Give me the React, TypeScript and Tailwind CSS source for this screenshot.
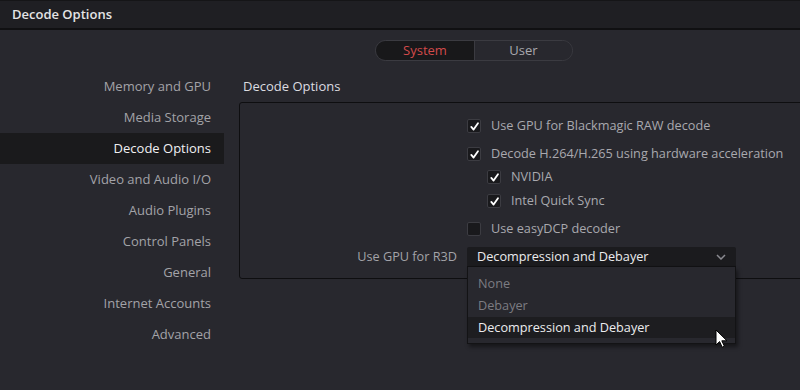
import React from "react";

const sidebarItems = [
    "Memory and GPU",
    "Media Storage",
    "Decode Options",
    "Video and Audio I/O",
    "Audio Plugins",
    "Control Panels",
    "General",
    "Internet Accounts",
    "Advanced",
];

const Checkbox: React.FC<{ checked?: boolean }> = ({ checked }) => (
    <span className="flex h-[14px] w-[14px] shrink-0 items-center justify-center rounded-[2px] border border-[#3c3c42] bg-[#19191c]">
        {checked && (
            <svg viewBox="0 0 12 12" className="h-[11px] w-[11px]" fill="none" stroke="#ffffff" strokeWidth={2} strokeLinecap="round" strokeLinejoin="round">
                <path d="M2.5 6.5l2.5 2.8L9.8 2.4" />
            </svg>
        )}
    </span>
);

const CheckRow: React.FC<{ label: string; checked?: boolean; nested?: boolean; className?: string }> = ({ label, checked, nested, className }) => (
    <>
        <div />
        <div className={`flex items-center gap-[10px] ${nested ? "pl-[20px]" : ""} ${className ?? ""}`}>
            <Checkbox checked={checked} />
            <span className="text-[12.7px] text-[#a9a9ae]">{label}</span>
        </div>
    </>
);

export default function App() {
    return (
        <div className="flex h-[390px] w-[800px] flex-col overflow-hidden bg-[#28282e] font-['Open_Sans',sans-serif]">
            {/* Title bar */}
            <div className="flex h-[30px] shrink-0 items-center border-t border-b-2 border-t-[#151517] border-b-[#101012] bg-[#1f1f23] pl-[12px]">
                <span className="text-[13px] font-semibold text-[#e4e4e6]">Decode Options</span>
            </div>

            {/* System / User toggle */}
            <div className="flex pt-[10px] pl-[375px]">
                <div className="flex h-[21px] overflow-hidden rounded-full border border-[#3b3b41] text-[13px]">
                    <div className="flex w-[98px] items-center justify-center bg-[#18181a] text-[#d24a4a]">System</div>
                    <div className="flex w-[98px] items-center justify-center border-l border-[#3b3b41] bg-[#28282e] text-[#a9a9ae]">User</div>
                </div>
            </div>

            <div className="flex pt-[10px]">
                {/* Sidebar */}
                <div className="flex w-[224px] shrink-0 flex-col">
                    {sidebarItems.map((item) => {
                        const active = item === "Decode Options";
                        return (
                            <div
                                key={item}
                                className={`flex h-[31px] items-center justify-end pr-[13px] text-[13px] ${
                                    active ? "bg-[#1a1a1c] text-[#f0f0f2]" : "text-[#a3a3a8]"
                                }`}
                            >
                                {item}
                            </div>
                        );
                    })}
                </div>

                {/* Content */}
                <div className="flex flex-1 flex-col pl-[15px]">
                    <div className="flex h-[31px] items-center pl-[4px] text-[13px] text-[#dcdce0]">Decode Options</div>
                    <div className="-mr-[10px] rounded-tl-[3px] rounded-bl-[3px] border border-[#0e0e10] pt-[13px] pb-[11px]">
                        <div className="grid grid-cols-[227px_1fr]">
                            <CheckRow label="Use GPU for Blackmagic RAW decode" checked className="h-[20px]" />
                            <CheckRow label="Decode H.264/H.265 using hardware acceleration" checked className="mt-[8px] h-[20px]" />
                            <CheckRow label="NVIDIA" checked nested className="mt-[3px] h-[20px]" />
                            <CheckRow label="Intel Quick Sync" checked nested className="mt-[4px] h-[20px]" />
                            <CheckRow label="Use easyDCP decoder" className="mt-[8px] h-[20px]" />

                            <div className="mt-[8px] flex h-[20px] items-center justify-end pr-[10px] text-[12.7px] text-[#a3a3a8]">
                                Use GPU for R3D
                            </div>
                            <div className="relative mt-[8px] h-[20px]">
                                <div className="flex h-[20px] w-[269px] items-center justify-between rounded-t-[2px] border-b border-[#121214] bg-[#1b1b1e] pr-[10px] pl-[10px] text-[12.7px] text-[#ececee]">
                                    <span>Decompression and Debayer</span>
                                    <svg viewBox="0 0 10 6" className="h-[6px] w-[10px]" fill="none" stroke="#8a8a90" strokeWidth={1.5}>
                                        <path d="M1 1l4 4 4-4" />
                                    </svg>
                                </div>

                                {/* Open menu */}
                                <div className="absolute top-[20px] left-0 z-10 flex w-[269px] flex-col border border-t-0 border-[#131315] bg-[#28282e] pt-[6px] pb-[5px] text-[12.7px] shadow-[2px_3px_4px_rgba(0,0,0,0.45)]">
                                    <div className="flex h-[22px] items-center pl-[10px] text-[#7c7c82]">None</div>
                                    <div className="flex h-[22px] items-center pl-[10px] text-[#7c7c82]">Debayer</div>
                                    <div className="flex h-[21px] items-center bg-[#1d1d20] pl-[10px] text-[#ececee]">Decompression and Debayer</div>

                                    {/* mouse pointer */}
                                    <svg viewBox="0 0 12 19" className="absolute top-[62px] left-[247px] h-[19px] w-[12px]">
                                        <path d="M1 1v15l3.6-3.4 2.6 5.6 2.2-1-2.6-5.4H12z" fill="#ffffff" stroke="#000000" strokeWidth={1} strokeLinejoin="round" />
                                    </svg>
                                </div>
                            </div>
                        </div>
                    </div>
                </div>
            </div>
        </div>
    );
}
